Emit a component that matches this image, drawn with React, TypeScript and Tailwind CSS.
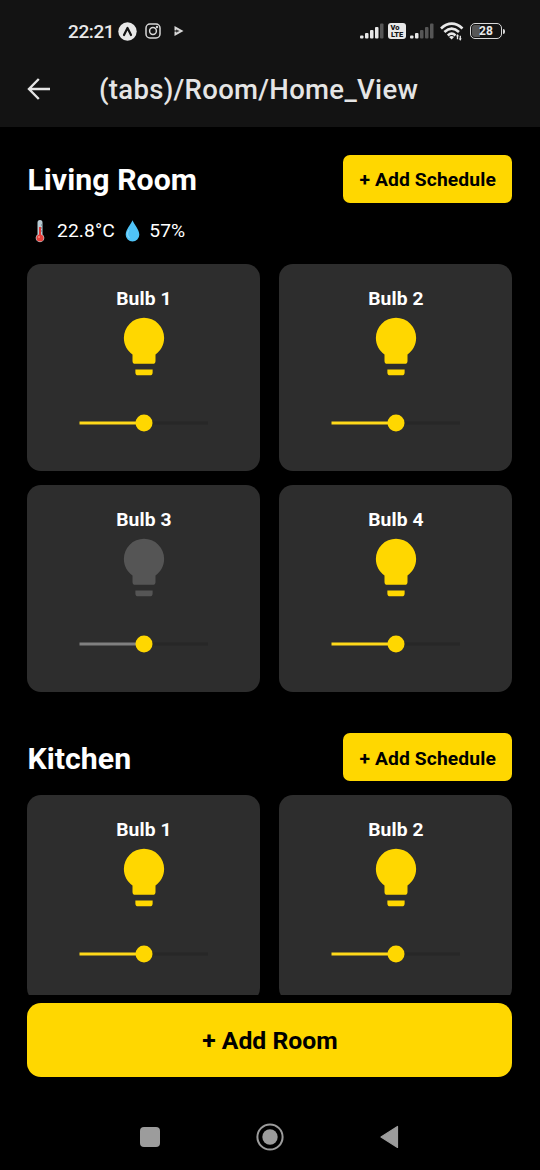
import React from "react";

const BULB =
  "M12,2A7,7 0 0,0 5,9C5,11.38 6.19,13.47 8,14.74V17A1,1 0 0,0 9,18H15A1,1 0 0,0 16,17V14.74C17.81,13.47 19,11.38 19,9A7,7 0 0,0 12,2M9,21A1,1 0 0,0 10,22H14A1,1 0 0,0 15,21V20H9V21Z";

function Signal({ level }: { level: number }) {
  return (
    <svg className="h-[16px] w-[24px] shrink-0" viewBox="0 0 24 16">
      {[3, 5.5, 8.5, 11.5, 15].map((h, i) => (
        <rect key={i} x={i * 5} y={15.5 - h} width="3.5" height={h} rx="1" fill={i < level ? "#e8e8e8" : "#565656"} />
      ))}
    </svg>
  );
}

function StatusBar() {
  return (
    <div className="flex h-[62px] items-center pl-[68px] pr-[35px] text-[#e8e8e8]">
      <span className="w-[50px] whitespace-nowrap text-[19px] font-medium leading-none tracking-[-0.4px]">22:21</span>
      <svg className="h-[19px] w-[19px]" viewBox="0 0 19 19">
        <circle cx="9.5" cy="9.5" r="9.2" fill="#e8e8e8" />
        <path d="M6 13 9.5 6 13 13" fill="none" stroke="#131313" strokeWidth="2.2" strokeLinejoin="round" strokeLinecap="round" />
      </svg>
      <svg className="ml-[8px] h-[16px] w-[16px]" viewBox="0 0 16 16" fill="none" stroke="#d8d8d8" strokeWidth="1.5">
        <rect x="1" y="1" width="14" height="14" rx="4" />
        <circle cx="8" cy="8" r="3.4" />
        <circle cx="12" cy="4" r="0.5" />
      </svg>
      <svg className="ml-[13px] h-[12px] w-[10px]" viewBox="0 0 10 12">
        <path d="M.5 1 9.5 6 .5 11Z" fill="#d8d8d8" />
        <path d="M2.2 4.2 5.6 6 2.2 7.8Z" fill="#444" />
        <path d="M0 6H3" stroke="#131313" strokeWidth="1" />
      </svg>
      <div className="ml-auto flex items-center">
        <Signal level={4} />
        <div className="ml-[4px] flex h-[16px] w-[18px] flex-col items-center justify-center rounded-[3px] bg-[#e8e8e8] text-[7.5px] font-black leading-[7px] text-[#131313]">
          <span className="self-start pl-[2.5px]">Vo</span>
          <span>LTE</span>
        </div>
        <div className="ml-[4px] flex">
          <Signal level={2} />
        </div>
        <svg className="ml-[6px] mt-[1px] h-[19px] w-[24px]" viewBox="0 0 24 19" fill="none" stroke="#e8e8e8" strokeWidth="2.7">
          <path d="M1 6.4Q11.7-3 22.5 6.4" />
          <path d="M4.4 10Q11.7 3.4 19 10" />
          <path d="M7.8 13.4Q11.7 10 15.5 13.4" />
          <path d="M9 15Q11.7 13.2 14 15L11.7 17.6Z" fill="#e8e8e8" stroke="none" />
          <path d="M17.5 12.8V17.3M20.3 13.8V18.3" strokeWidth="1.3" />
          <path d="M16 14.3 17.5 12.3 19 14.3ZM18.8 16.6 20.3 18.6 21.8 16.6Z" fill="#e8e8e8" stroke="none" />
        </svg>
        <div className="ml-[6px] flex h-[16px] w-[32px] items-center justify-center rounded-[5px] border-[1.5px] border-[#d8d8d8] p-px">
          <div className="flex h-full w-full items-center justify-center rounded-[3px] bg-[linear-gradient(90deg,#565656_28%,transparent_28%)] text-[12px] font-bold leading-none">
            28
          </div>
        </div>
        <div className="ml-px h-[5px] w-[2px] rounded-r-sm bg-[#d8d8d8]" />
      </div>
    </div>
  );
}

function Header() {
  return (
    <header className="h-[127px] shrink-0 bg-[#131313]">
      <StatusBar />
      <div className="flex h-[56px] items-center pl-[27px]">
        <svg className="-mt-[3px] h-[24px] w-[24px]" viewBox="0 0 24 24" fill="none" stroke="#e5e5e5" strokeWidth="2.4">
          <path d="M11.8 2 2 12 11.8 22M2.4 12H23" />
        </svg>
        <h1 className="ml-[48px] whitespace-nowrap text-[27.5px] font-medium leading-none tracking-[0.31px] text-[#e5e5e5]">
          (tabs)/Room/Home_View
        </h1>
      </div>
    </header>
  );
}

function BulbCard({ name, on = true }: { name: string; on?: boolean }) {
  return (
    <div className="flex h-[206.5px] w-[233px] flex-col items-center rounded-[14px] bg-[#2d2d2d] pt-[22px]">
      <h3 className="text-[19.25px] font-bold leading-[25px] tracking-[0.1px] text-white">{name}</h3>
      <svg className="mt-px h-[69px] w-[70px]" viewBox="0 0 24 24" fill={on ? "#ffd700" : "#555555"}>
        <path d={BULB} />
      </svg>
      <svg className="mt-[33px] h-[18px] w-[130px]" viewBox="0 0 130 18">
        <rect x="65" y="7.5" width="64" height="3" fill="#272727" />
        <rect x="0.5" y="7.5" width="64.5" height="3" fill={on ? "#ffd91a" : "#808080"} />
        <circle cx="65" cy="9" r="8.5" fill="#ffd700" />
      </svg>
    </div>
  );
}

function RoomHeader({ name }: { name: string }) {
  return (
    <div className="flex h-[48.5px] items-center justify-between">
      <h2 className="pt-[3px] text-[30.25px] font-bold leading-none tracking-[0.05px] text-white">{name}</h2>
      <button className="h-[48.5px] w-[169.5px] whitespace-nowrap rounded-[7px] bg-[#ffd700] pt-[2px] text-[19.25px] font-bold leading-none tracking-[0.12px] text-black">
        + Add Schedule
      </button>
    </div>
  );
}

export default function App() {
  return (
    <div className="flex h-[1170px] w-[540px] flex-col overflow-hidden bg-black font-['Roboto','Noto_Sans',sans-serif]">
      <Header />
      <main className="h-[868px] shrink-0 overflow-hidden pl-[27.4px] pr-[27.6px] pt-[27.5px]">
        <section>
          <RoomHeader name="Living Room" />
          <div className="mt-[14px] flex h-[28px] items-center text-[19.25px] leading-none text-white">
            <svg className="ml-[7.6px] h-[23px] w-[10px]" viewBox="0 0 10 23">
              <path d="M2.5 2.5a2.5 2.5 0 0 1 5 0v12a4.3 4.3 0 1 1-5 0Z" fill="#b8cbd3" />
              <path d="M4 7h2v8H4Z" fill="#e53935" />
              <circle cx="5" cy="18" r="3.6" fill="#e5403a" />
              <path d="M6 5h2M6 8h2M6 11h2" stroke="#607078" strokeWidth="1" />
              <circle cx="4" cy="17" r="1" fill="#ff8a80" />
            </svg>
            <span className="ml-[12px] w-[59px] whitespace-nowrap tracking-[0.1px]">22.8°C</span>
            <svg className="ml-[8.6px] h-[22px] w-[15px]" viewBox="0 0 15 22">
              <path d="M7.5.3C6 4.5.7 9.6.7 14.7a6.8 6.8 0 0 0 13.6 0C14.3 9.6 9 4.5 7.5.3Z" fill="#4fc3f7" />
              <path d="M3.8 10C2 13 2 16 4.5 18" stroke="#81d4fa" strokeWidth="1.3" fill="none" />
            </svg>
            <span className="ml-[9.7px] tracking-[0.1px]">57%</span>
          </div>
          <div className="mt-[19px] grid grid-cols-2 gap-x-[19px] gap-y-[14.5px]">
            <BulbCard name="Bulb 1" />
            <BulbCard name="Bulb 2" />
            <BulbCard name="Bulb 3" on={false} />
            <BulbCard name="Bulb 4" />
          </div>
        </section>
        <section className="mt-[41.4px]">
          <RoomHeader name="Kitchen" />
          <div className="mt-[13.8px] grid grid-cols-2 gap-x-[19px]">
            <BulbCard name="Bulb 1" />
            <BulbCard name="Bulb 2" />
          </div>
        </section>
      </main>
      <div className="mt-[8px] pl-[27.4px] pr-[27.6px]">
        <button className="h-[74.4px] w-full rounded-[14px] bg-[#ffd700] pt-[3px] text-[24.75px] font-bold leading-none text-black">
          + Add Room
        </button>
      </div>
      <nav className="mt-[43.6px] flex h-[32px] items-center pl-[139.5px]">
        <div className="h-[20px] w-[20.5px] rounded-[4px] bg-[#9c9c9c]" />
        <svg className="ml-[96px] mt-px h-[28px] w-[28px]" viewBox="0 0 28 28">
          <circle cx="14" cy="14" r="12.6" fill="none" stroke="#9c9c9c" strokeWidth="2" />
          <circle cx="14" cy="14" r="7.7" fill="#9c9c9c" />
        </svg>
        <svg className="ml-[95px] mt-px h-[24px] w-[20px]" viewBox="0 0 20 24">
          <path d="M2 12 18.5 1.5V22.5Z" fill="#9c9c9c" stroke="#9c9c9c" strokeWidth="1.2" strokeLinejoin="round" />
        </svg>
      </nav>
    </div>
  );
}
